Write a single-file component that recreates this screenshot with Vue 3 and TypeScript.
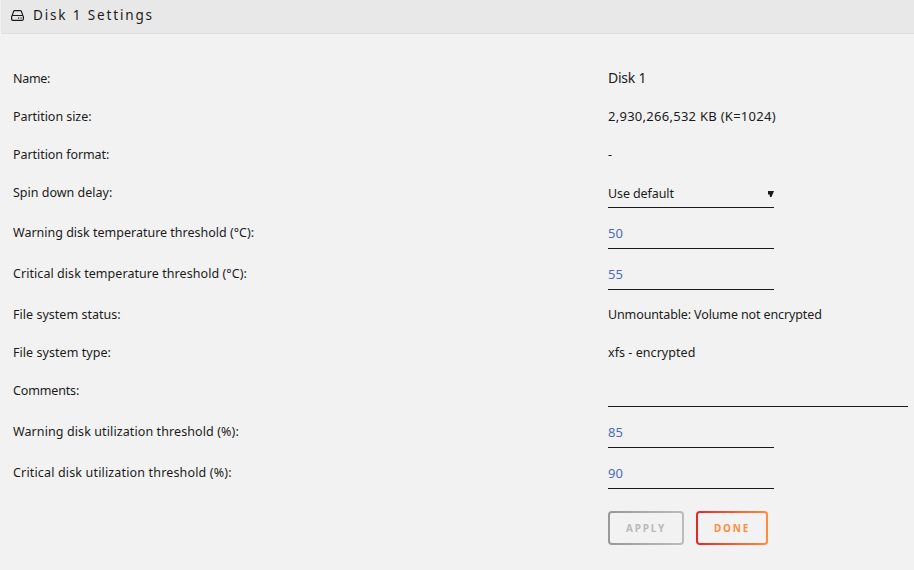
<template>
  <main class="settings">
    <header class="settings__header">
      <svg class="settings__icon" viewBox="0 0 13 11" aria-hidden="true">
        <path d="M1.2 5.500 2.600 1.400Q2.900.6 3.700.6h5.600q.8 0 1.100.8l1.400 4.100M1.800 5.500h9.400q1.200 0 1.200 1.200v2.400q0 1.200-1.200 1.200H1.800Q.6 10.300.6 9.100V6.700Q.6 5.500 1.800 5.500Z" />
        <rect x="7" y="7.400" width="1.200" height="1.200" />
        <rect x="9.500" y="7.400" width="1.200" height="1.200" />
      </svg>
      <h1 class="settings__title">Disk 1 Settings</h1>
    </header>

    <form class="settings__form" @submit.prevent>
      <div
        v-for="row in rows"
        :key="row.label"
        class="row"
        :class="`row--${row.kind}`"
      >
        <label class="row__label">
          <span :style="{ letterSpacing: `${row.labelTracking}px` }">{{ row.label }}</span>
        </label>
        <div v-if="row.kind === 'select'" class="field field--select">
          <span :style="{ letterSpacing: `${row.tracking}px` }">{{ row.value }}</span>
          <svg class="field__arrow" viewBox="0 0 6 6" aria-hidden="true">
            <path d="M0 0h6L3.500 6H2L1.500 3.500H0Z" />
          </svg>
        </div>
        <input
          v-else-if="row.kind === 'input'"
          v-model="row.value"
          class="field"
          :class="{ 'field--wide': row.wide }"
          :aria-label="row.label"
        />
        <div v-else class="row__value" :class="row.size && `row__value--${row.size}`">
          <span :style="{ letterSpacing: `${row.tracking}px` }">{{ row.value }}</span>
        </div>
      </div>

      <div class="settings__actions">
        <button class="button button--apply" disabled>Apply</button>
        <button class="button button--done">Done</button>
      </div>
    </form>
  </main>
</template>

<script setup lang="ts">
import { ref } from "vue";

interface SettingRow {
  label: string;
  value: string;
  kind: "text" | "select" | "input";
  labelTracking: number;
  tracking?: number;
  size?: "name" | "number";
  wide?: boolean;
}

const rows = ref<SettingRow[]>([
  { label: "Name:", value: "Disk 1", kind: "text", size: "name", labelTracking: -0.3, tracking: -0.25 },
  { label: "Partition size:", value: "2,930,266,532 KB (K=1024)", kind: "text", size: "number", labelTracking: -0.05, tracking: 0.27 },
  { label: "Partition format:", value: "-", kind: "text", labelTracking: -0.06, tracking: 0 },
  { label: "Spin down delay:", value: "Use default", kind: "select", labelTracking: 0, tracking: -0.1 },
  { label: "Warning disk temperature threshold (°C):", value: "50", kind: "input", labelTracking: 0 },
  { label: "Critical disk temperature threshold (°C):", value: "55", kind: "input", labelTracking: 0.06 },
  { label: "File system status:", value: "Unmountable: Volume not encrypted", kind: "text", labelTracking: 0.03, tracking: -0.12 },
  { label: "File system type:", value: "xfs - encrypted", kind: "text", labelTracking: 0.05, tracking: 0.05 },
  { label: "Comments:", value: "", kind: "input", labelTracking: -0.15, wide: true },
  { label: "Warning disk utilization threshold (%):", value: "85", kind: "input", labelTracking: 0.1 },
  { label: "Critical disk utilization threshold (%):", value: "90", kind: "input", labelTracking: 0.16 },
]);
</script>

<style>
body {
  background: #f2f2f2;
}
</style>

<style scoped>
.settings {
  box-sizing: border-box;
  min-height: 570px;
  color: #1c1b1b;
  background: #f2f2f2;
  font-family: "Noto Sans", sans-serif;
  font-size: 12.5px;
}

.settings__header {
  display: flex;
  align-items: center;
  box-sizing: border-box;
  height: 34px;
  margin-left: 1px;
  padding: 0 10px 2px;
  background: #e8e8e8;
  border-bottom: 1px solid #dedede;
}

.settings__icon {
  width: 13px;
  height: 11px;
  margin-right: 9px;
  fill: none;
  stroke: #1c1b1b;
  stroke-width: 1.2;
}

.settings__icon rect {
  fill: #1c1b1b;
  stroke: none;
}

.settings__title {
  margin: 0;
  padding-bottom: 2px;
  font-size: 13.5px;
  line-height: 28px;
  font-weight: 400;
  letter-spacing: 1.85px;
}

.settings__form {
  padding: 25px 6px 0 13px;
}

.row {
  display: grid;
  grid-template-columns: 595px 1fr;
  grid-template-rows: 100%;
  height: 38px;
  line-height: 40px;
  white-space: nowrap;
}

.row--select {
  height: 40px;
}

.row--input {
  height: 41px;
}

.row__value--name {
  font-size: 14px;
  line-height: 38px;
}

.row__value--number {
  font-size: 13px;
  line-height: 38px;
}

.field {
  box-sizing: border-box;
  width: 166px;
  height: 36px;
  padding: 5px 0 0;
  border: 0;
  border-bottom: 1px solid #1c1b1b;
  border-radius: 0;
  outline: none;
  background: transparent;
  color: #486dba;
  font: inherit;
  font-size: 13px;
  line-height: 30px;
}

.field--select {
  display: flex;
  align-items: center;
  justify-content: space-between;
  height: 35px;
  padding-top: 7px;
  color: #1c1b1b;
  font-size: 12.5px;
}

.field--wide {
  width: 300px;
}

.field__arrow {
  width: 6px;
  height: 6px;
  fill: #1c1b1b;
}

.settings__actions {
  display: flex;
  gap: 12px;
  padding: 17px 0 0 595px;
}

.button {
  box-sizing: border-box;
  height: 34px;
  padding: 0;
  border: 2px solid transparent;
  border-radius: 4px;
  font-family: "Noto Sans", sans-serif;
  font-size: 10px;
  font-weight: 700;
  line-height: 30px;
  letter-spacing: 1.8px;
  text-transform: uppercase;
}

.button--apply {
  width: 76px;
  color: #b9b9b9;
  background:
    linear-gradient(#f2f2f2, #f2f2f2) padding-box,
    linear-gradient(90deg, #999, #bcbcbc) border-box;
}

.button--done {
  width: 72px;
  color: #ff8c3c;
  background:
    linear-gradient(#f2f2f2, #f2f2f2) padding-box,
    linear-gradient(90deg, #e22828, #ff8c3c) border-box;
}
</style>
